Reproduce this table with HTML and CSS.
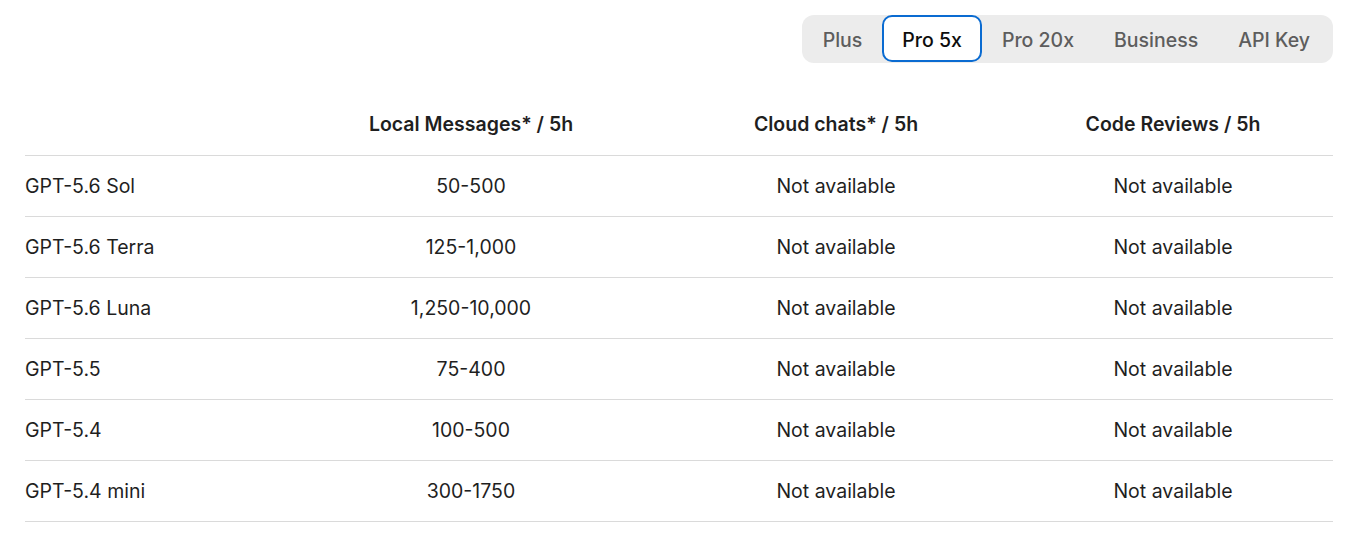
FILE: index.html
```html
<!DOCTYPE html>
<html lang="en">
<head>
<meta charset="utf-8">
<title>Usage limits</title>
<link rel="stylesheet" href="styles.css">
</head>
<body>
<div class="page">
  <div class="tabs-row">
    <div class="tabs">
      <button class="tab">Plus</button>
      <button class="tab active">Pro 5x</button>
      <button class="tab">Pro 20x</button>
      <button class="tab">Business</button>
      <button class="tab">API Key</button>
    </div>
  </div>
  <div class="table">
    <div class="row head">
      <div class="cell first"></div>
      <div class="cell">Local Messages* / 5h</div>
      <div class="cell">Cloud chats* / 5h</div>
      <div class="cell">Code Reviews / 5h</div>
    </div>
    <div class="row">
      <div class="cell first">GPT-5.6 Sol</div>
      <div class="cell">50-500</div>
      <div class="cell">Not available</div>
      <div class="cell">Not available</div>
    </div>
    <div class="row">
      <div class="cell first">GPT-5.6 Terra</div>
      <div class="cell">125-1,000</div>
      <div class="cell">Not available</div>
      <div class="cell">Not available</div>
    </div>
    <div class="row">
      <div class="cell first">GPT-5.6 Luna</div>
      <div class="cell">1,250-10,000</div>
      <div class="cell">Not available</div>
      <div class="cell">Not available</div>
    </div>
    <div class="row">
      <div class="cell first">GPT-5.5</div>
      <div class="cell">75-400</div>
      <div class="cell">Not available</div>
      <div class="cell">Not available</div>
    </div>
    <div class="row">
      <div class="cell first">GPT-5.4</div>
      <div class="cell">100-500</div>
      <div class="cell">Not available</div>
      <div class="cell">Not available</div>
    </div>
    <div class="row">
      <div class="cell first">GPT-5.4 mini</div>
      <div class="cell">300-1750</div>
      <div class="cell">Not available</div>
      <div class="cell">Not available</div>
    </div>
  </div>
</div>
</body>
</html>
```
FILE: styles.css
```css
* { box-sizing: border-box; }
html, body { margin: 0; padding: 0; background: #fff; }
body {
  font-family: Inter, "Noto Sans", "Liberation Sans", sans-serif;
  color: #1f1f1f;
  -webkit-font-smoothing: antialiased;
}
.page {
  padding: 15px 24px 0 25px;
}
.tabs-row {
  display: flex;
  justify-content: flex-end;
}
.tabs {
  display: flex;
  align-items: flex-start;
  background: #ececec;
  border-radius: 12px;
  height: 48px;
  padding: 0 3px 0 1px;
}
.tab {
  font-family: inherit;
  font-size: 19.5px;
  font-weight: 500;
  color: #5d5d5d;
  background: transparent;
  border: 2px solid transparent;
  border-radius: 10px;
  padding: 3px 18px 0;
  margin: 0;
  height: 47px;
  cursor: pointer;
}
.tab.active {
  background: #fff;
  color: #0d0d0d;
  border-color: #0a6bd1;
}
.table {
  margin-top: 31px;
}
.row {
  display: grid;
  grid-template-columns: 258px 376px 354px 320px;
  height: 61px;
  border-bottom: 1px solid #dadada;
  align-items: center;
  font-size: 19.5px;
}
.row.head {
  height: 62px;
  font-weight: 600;
  padding-bottom: 1px;
}
.cell {
  text-align: center;
}
.cell.first {
  text-align: left;
}
```
